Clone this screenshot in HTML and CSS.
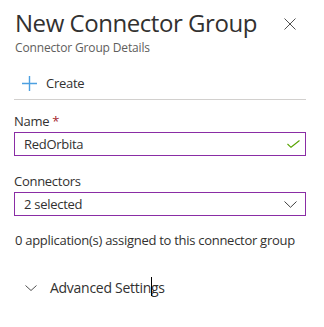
FILE: index.html
```html
<!DOCTYPE html>
<html lang="en">
<head>
<meta charset="utf-8">
<title>New Connector Group</title>
<link rel="stylesheet" href="styles.css">
</head>
<body>
<div class="panel">
  <header class="head">
    <div class="titles">
      <h1 class="title">New Connector Group</h1>
      <div class="subtitle">Connector Group Details</div>
    </div>
    <button class="close" aria-label="Close">
      <svg width="12" height="12" viewBox="0 0 12 12"><path d="M0.5 0.5 L11.5 11.5 M11.5 0.5 L0.5 11.5" stroke="#505050" stroke-width="1" fill="none"/></svg>
    </button>
  </header>

  <div class="toolbar">
    <button class="cmd">
      <svg class="cmd-icon" width="15" height="15" viewBox="0 0 15 15"><path d="M7.5 0 V15 M0 7.5 H15" stroke="#0078d4" stroke-width="1.4" fill="none" opacity="0.7"/></svg>
      <span>Create</span>
    </button>
  </div>

  <div class="form">
    <div class="field">
      <label class="label">Name <span class="req">*</span></label>
      <div class="box">
        <span class="value">RedOrbita</span>
        <svg width="13" height="8" viewBox="0 0 13 8"><path d="M0.5 4 L4 7.3 L12.5 0.5" stroke="#57a300" stroke-width="1.1" fill="none"/></svg>
      </div>
    </div>
    <div class="field">
      <label class="label">Connectors</label>
      <div class="box select">
        <span class="value">2 selected</span>
        <svg width="13" height="7" viewBox="0 0 13 7"><path d="M0.5 0.5 L6.5 6.3 L12.5 0.5" stroke="#404040" stroke-width="1" fill="none"/></svg>
      </div>
    </div>
  </div>

  <p class="info">0 application(s) assigned to this connector group</p>

  <div class="adv">
    <svg width="12" height="6" viewBox="0 0 12 6"><path d="M0.5 0.5 L6 5.5 L11.5 0.5" stroke="#505050" stroke-width="1" fill="none"/></svg>
    <span class="adv-text">Advanced Settin<span class="ibeam"></span>gs</span>
  </div>
</div>
</body>
</html>
```

FILE: styles.css
```css
* { box-sizing: border-box; }
html, body { margin: 0; padding: 0; background: #fff; }
body {
  font-family: "Open Sans", "Noto Sans", sans-serif;
  color: #323130;
  letter-spacing: -0.28px;
}
.panel {
  width: 324px;
  padding: 7px 18px 0 14px;
}
.head {
  display: flex;
  justify-content: space-between;
  align-items: flex-start;
}
.titles { padding-left: 1px; }
.title {
  margin: 0;
  font-size: 24px;
  font-weight: 500;
  line-height: 32px;
  letter-spacing: -0.45px;
  color: #323130;
}
.subtitle {
  font-size: 12px;
  line-height: 16px;
  letter-spacing: -0.15px;
  color: #605e5c;
  margin-top: 1px;
}
.close {
  border: 0;
  background: none;
  padding: 0;
  margin-top: 11px;
  margin-right: 10px;
  width: 12px;
  height: 12px;
  display: block;
}
.close svg { display: block; }
.toolbar {
  margin-top: 18px;
  border-bottom: 1px solid #d2d0ce;
  padding: 0 0 7px 8px;
}
.cmd {
  border: 0;
  background: none;
  padding: 0;
  display: flex;
  align-items: center;
  gap: 9px;
  font: inherit;
  font-size: 13px;
  line-height: 18px;
  letter-spacing: -0.28px;
  color: #323130;
}
.cmd-icon { display: block; }
.form {
  display: flex;
  flex-direction: column;
  gap: 17px;
  margin-top: 13px;
}
.label {
  display: block;
  font-size: 13px;
  line-height: 16px;
  margin-bottom: 3px;
}
.req { color: #a4262c; }
.box {
  height: 24px;
  border: 1px solid #8a2da5;
  display: flex;
  align-items: center;
  justify-content: space-between;
  padding: 0 5px 0 9px;
  font-size: 13px;
}
.box.select { padding-right: 8px; }
.box svg { display: block; }
.info {
  margin: 15px 0 0 1px;
  font-size: 13px;
  line-height: 18px;
  white-space: nowrap;
}
.adv {
  margin-top: 29px;
  padding-left: 11px;
  display: flex;
  align-items: center;
  gap: 13px;
  font-size: 14px;
}
.adv svg { display: block; }
.adv-text { position: relative; }
.ibeam {
  position: absolute;
  top: -1px;
  width: 1px;
  height: 19px;
  background: #000;
}
```
